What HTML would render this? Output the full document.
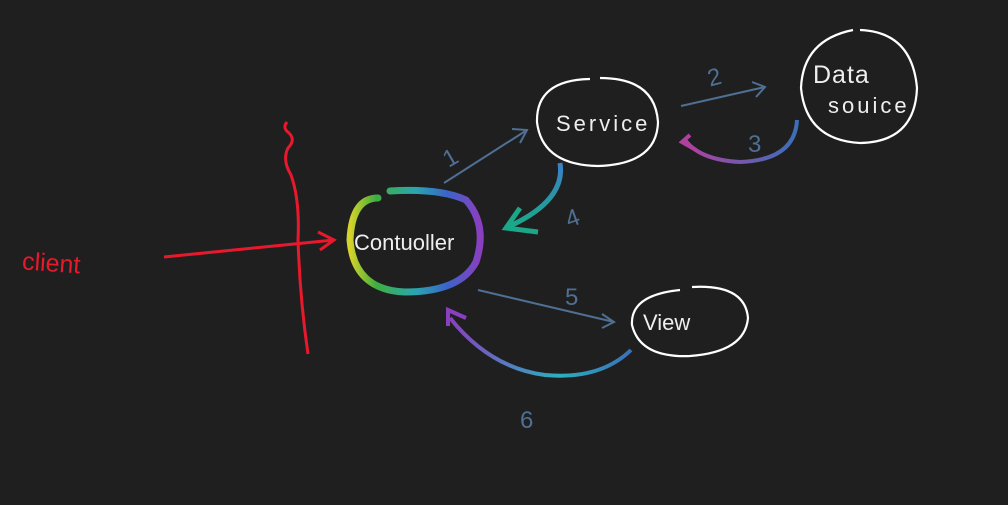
<!DOCTYPE html>
<html><head><meta charset="utf-8"><style>
html,body{margin:0;padding:0;background:#1f1f1f;}
svg{display:block}
text{font-family:"Liberation Sans",sans-serif;}
</style></head><body>
<svg width="1008" height="505" viewBox="0 0 1008 505" xmlns="http://www.w3.org/2000/svg">
<defs>
<linearGradient id="rb" x1="0" y1="0" x2="1" y2="0">
<stop offset="0" stop-color="#d6d32a"/><stop offset="0.2" stop-color="#3fae3f"/><stop offset="0.5" stop-color="#2aa6b0"/><stop offset="0.75" stop-color="#3b64c8"/><stop offset="1" stop-color="#8a3fc0"/>
</linearGradient>
<linearGradient id="g6" x1="1" y1="0" x2="0" y2="0">
<stop offset="0" stop-color="#3b6fb8"/><stop offset="0.4" stop-color="#2ab0c0"/><stop offset="1" stop-color="#8a3fc0"/>
</linearGradient>
<linearGradient id="g3" x1="1" y1="0" x2="0" y2="0">
<stop offset="0" stop-color="#3b6fb8"/><stop offset="1" stop-color="#b040a0"/>
</linearGradient>
<linearGradient id="g4" x1="0" y1="0" x2="0" y2="1">
<stop offset="0" stop-color="#3b7fc8"/><stop offset="1" stop-color="#1aa888"/>
</linearGradient>
</defs>
<rect width="1008" height="505" fill="#1f1f1f"/>
<!-- client -->
<text x="22" y="272" fill="#e8192c" font-size="25" transform="rotate(4 60 265)">client</text>
<path d="M164 257 L334 240" stroke="#e8192c" stroke-width="3" fill="none"/>
<path d="M318 232 L334 240 L320 250" stroke="#e8192c" stroke-width="3" fill="none"/>
<path d="M287 122 Q282 128 289 133 Q296 140 288 148 Q282 160 291 175 Q300 200 298 240 Q300 300 308 354" stroke="#e8192c" stroke-width="3" fill="none"/>
<!-- controller -->
<path d="M378 198 Q352 198 350 240 Q354 290 405 292 Q460 292 476 262 Q488 225 466 200 Q440 188 390 191" stroke="url(#rb)" stroke-width="7" fill="none" stroke-linecap="round"/>
<text x="354" y="250" fill="#eee" font-size="22">Contuoller</text>
<!-- service -->
<path d="M590 79 Q536 80 537 122 Q542 165 598 166 Q657 164 658 122 Q655 78 600 78" stroke="#fff" stroke-width="2.2" fill="none"/>
<text x="556" y="131" fill="#eee" font-size="22" letter-spacing="3">Service</text>
<!-- data source -->
<path d="M853 30 Q803 40 801 88 Q806 140 860 143 Q915 142 917 88 Q912 32 860 30" stroke="#fff" stroke-width="2.2" fill="none"/>
<text x="813" y="83" fill="#eee" font-size="25" letter-spacing="1">Data</text>
<text x="828" y="113" fill="#eee" font-size="22" letter-spacing="3">souice</text>
<!-- view -->
<path d="M680 290 Q630 295 632 325 Q640 358 690 356 Q745 352 748 318 Q745 284 692 287" stroke="#fff" stroke-width="2.2" fill="none"/>
<text x="643" y="330" fill="#eee" font-size="22">View</text>
<!-- arrows -->
<g stroke="#4f6f93" stroke-width="2" fill="none">
<path d="M444 183 L527 130"/><path d="M512 129 L527 130 L520 143"/>
<path d="M681 106 L765 87"/><path d="M752 82 L765 87 L756 97"/>
<path d="M478 290 L614 322"/><path d="M602 314 L614 322 L602 328"/>
</g>
<g fill="#4f6f93" font-size="24">
<text x="444" y="165" transform="rotate(-30 452 158)">1</text>
<text x="708" y="85" transform="rotate(-15 715 78)">2</text>
<text x="748" y="152">3</text>
<text x="565" y="225" transform="rotate(-20 575 215)">4</text>
<text x="565" y="305">5</text>
<text x="520" y="428">6</text>
</g>
<path d="M797 120 Q795 160 740 162 Q700 160 685 140" stroke="url(#g3)" stroke-width="4" fill="none"/>
<path d="M690 135 L682 142 L696 150" stroke="#b040a0" stroke-width="4" fill="none"/>
<path d="M560 163 Q566 200 510 226" stroke="url(#g4)" stroke-width="5" fill="none"/>
<path d="M520 208 L506 228 L538 232" stroke="#1aa888" stroke-width="5" fill="none"/>
<path d="M631 350 Q600 380 545 375 Q490 368 450 318" stroke="url(#g6)" stroke-width="4" fill="none"/>
<path d="M448 326 L448 310 L466 318" stroke="#8a3fc0" stroke-width="4" fill="none"/>
</svg>
</body></html>
